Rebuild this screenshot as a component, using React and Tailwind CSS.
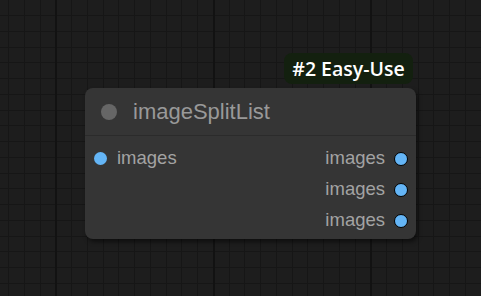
import React from 'react';

const W = 481;
const H = 296;
const STEP = 15.75;

const GridBackground = () => {
  const xs = [];
  for (let i = -4; i * STEP + 8 < W; i++) xs.push(8 + i * STEP);
  const ys = [];
  for (let i = -1; i * STEP + 15 < H; i++) ys.push(15 + i * STEP);
  const majors = [56, 213.5, 371];

  return (
    <svg className="absolute inset-0" width={W} height={H}>
      <rect width={W} height={H} fill="#1d1d1d" />
      {xs.map((x) => (
        <rect key={`x${x}`} x={Math.round(x)} y={0} width={1} height={H} fill="#161616" />
      ))}
      {ys.map((y) => (
        <rect key={`y${y}`} x={0} y={Math.round(y)} width={W} height={1} fill="#161616" />
      ))}
      {majors.map((x) => (
        <rect key={`m${x}`} x={Math.round(x) - 1} y={0} width={2} height={H} fill="#121212" />
      ))}
    </svg>
  );
};

const OutputRow = ({ label }) => (
  <div className="h-[31px] flex items-center justify-end pr-[8px]">
    <span className="text-[18.5px] text-[#a3a3a3] leading-none">{label}</span>
    <span className="ml-[9px] w-[14px] h-[14px] rounded-full bg-[#64b5f6] border-[1.5px] border-black" />
  </div>
);

const App = () => {
  return (
    <div
      className="relative w-[481px] h-[296px] overflow-hidden"
      style={{ fontFamily: '"Liberation Sans", Arial, sans-serif' }}
    >
      <GridBackground />

      {/* Badge */}
      <div
        className="absolute left-[284px] top-[53px] w-[129px] h-[31px] rounded-[8px] bg-[#13200f] flex items-center justify-center text-white text-[19.5px] font-semibold"
        style={{ fontFamily: '"Open Sans", "Noto Sans", sans-serif' }}
      >
        #2 Easy-Use
      </div>

      {/* Node */}
      <div className="absolute left-[85px] top-[88px] w-[331px] h-[151px] rounded-[8px] bg-[#353535] shadow-[2px_3px_4px_rgba(0,0,0,0.5)] flex flex-col">
        <div className="h-[48px] flex items-center border-b border-[#2b2b2b]">
          <span className="ml-[16px] w-[16px] h-[16px] rounded-full bg-[#666666]" />
          <span className="ml-[16px] text-[22px] text-[#999999] leading-none">imageSplitList</span>
        </div>
        <div className="flex pt-[7px]">
          <div className="flex-1">
            <div className="h-[31px] flex items-center pl-[9px]">
              <span className="w-[13px] h-[13px] rounded-full bg-[#64b5f6]" />
              <span className="ml-[10px] text-[18.5px] text-[#a3a3a3] leading-none">images</span>
            </div>
          </div>
          <div className="flex-1">
            <OutputRow label="images" />
            <OutputRow label="images" />
            <OutputRow label="images" />
          </div>
        </div>
      </div>
    </div>
  );
};

export default App;
